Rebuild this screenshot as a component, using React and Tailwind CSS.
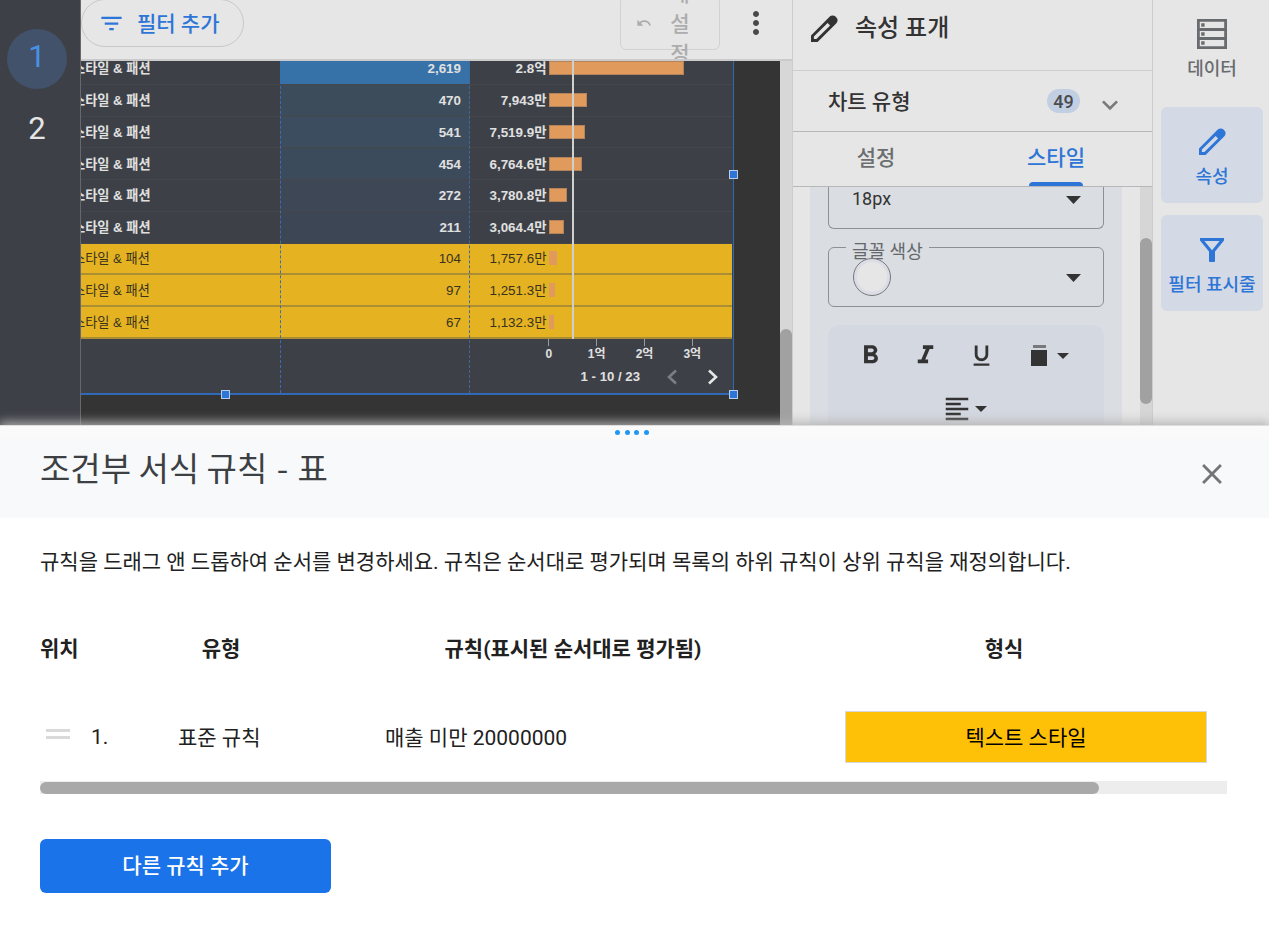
import {
  MdClose,
  MdExpandMore,
  MdFilterList,
  MdFormatAlignLeft,
  MdFormatBold,
  MdFormatItalic,
  MdFormatUnderlined,
  MdMoreVert,
  MdUndo,
} from 'react-icons/md';

const rows = [
  { count: '2,619', sales: '2.8억', bar: 135, heat: 'bg-[#3671a7]' },
  { count: '470', sales: '7,943만', bar: 38, heat: 'bg-[#3c4c5b]' },
  { count: '541', sales: '7,519.9만', bar: 36, heat: 'bg-[#3b4d5e]' },
  { count: '454', sales: '6,764.6만', bar: 33, heat: 'bg-[#3c4b5b]' },
  { count: '272', sales: '3,780.8만', bar: 18, heat: 'bg-[#3d4756]' },
  { count: '211', sales: '3,064.4만', bar: 15, heat: 'bg-[#3d4655]' },
  { count: '104', sales: '1,757.6만', bar: 8, matched: true },
  { count: '97', sales: '1,251.3만', bar: 6, matched: true },
  { count: '67', sales: '1,132.3만', bar: 5, matched: true },
];

function Pencil({ className }) {
  return (
    <svg viewBox="0 0 27 27" fill="currentColor" fillRule="evenodd" className={className}>
      <path d="M0 27v-6.6L18.8 1.6a4 4 0 0 1 5.7 0l.9.9a4 4 0 0 1 0 5.7L6.6 27zM2.9 24.1v-2.5L16.6 7.9l2.5 2.5L5.4 24.1z" />
    </svg>
  );
}

function DataIcon() {
  return (
    <svg viewBox="0 0 30 30" className="size-[30px]" fill="none" stroke="currentColor" strokeWidth="2.8">
      <path d="M1.4 1.4h27.2v27.2H1.4zM1.4 10.5h27.2M1.4 19.5h27.2" />
      <path d="M4.2 6h3.4M4.2 15h3.4M4.2 24h3.4" strokeWidth="3.4" />
    </svg>
  );
}

function Funnel() {
  return (
    <svg viewBox="0 0 24 24" className="size-6" fill="currentColor" fillRule="evenodd">
      <path d="M0 0h24v2.4L15 13.6V23a1 1 0 0 1-1 1h-4a1 1 0 0 1-1-1v-9.4L0 2.4zM4.4 3 12 12.2 19.6 3z" />
    </svg>
  );
}

function Caret({ className = 'h-2 w-[15px]' }) {
  return (
    <svg viewBox="0 0 15 8" preserveAspectRatio="none" className={className} fill="#333">
      <path d="M0 0h15L7.5 8z" />
    </svg>
  );
}

function PageRail() {
  return (
    <nav className="flex w-[81px] shrink-0 flex-col border-r border-[#66686d] bg-[#3e4047] pt-[29px] pl-[7px] font-['Roboto',sans-serif] text-[31px]">
      <span className="flex size-[60px] items-center justify-center rounded-full bg-[#42526a] pb-1 text-[#4a90e2]">1</span>
      <span className="mt-[10px] flex size-[60px] items-center justify-center text-[#e6e6e6]">2</span>
    </nav>
  );
}

function Toolbar() {
  return (
    <div className="flex h-[61px] shrink-0 overflow-hidden border-b-2 border-[#cbcbcb] bg-[#e6e6e6]">
      <button className="-mt-px flex h-12 w-[163px] items-center rounded-full border border-[#c8c8c8] pl-4 text-[21px] font-medium text-[#2d75d6]">
        <MdFilterList className="mr-[12px] size-[27px]" />
        <span className="pt-[3px] whitespace-nowrap">필터 추가</span>
      </button>
      <button className="-mt-1 ml-auto flex h-[54px] w-[100px] items-center rounded-md border border-[#d2d2d2] pl-[15px] text-[#adadad]">
        <MdUndo className="size-4" />
        <span className="ml-[18px] w-5 pt-[2px] text-[21px] leading-[30px] font-medium break-all">재설정</span>
      </button>
      <MdMoreVert className="mt-[5px] mr-[18px] ml-[18px] size-9 text-[#47494b]" />
    </div>
  );
}

function Handle({ className }) {
  return <i className={`absolute size-[9px] border border-[#b9cdea] bg-[#2d75d6] ${className}`} />;
}

function TableChart() {
  return (
    <div className="relative h-[334px] w-[653px] border-r border-b-2 border-[#2f69b8] bg-[#3e4047] font-['Liberation_Sans','Noto_Sans_CJK_KR',sans-serif] text-[#e0e0e0]">
      <div className="h-[278px] overflow-hidden pr-px">
        <div className="-mt-[8px]">
          {rows.map((row) => (
            <div
              key={row.count}
              className={
                row.matched
                  ? 'grid h-[31.75px] grid-cols-[199px_190px_1fr] border-b-2 border-[#ab8e33] bg-[#e5b322] text-[13.2px] text-[#38321f]'
                  : 'grid h-[31.75px] grid-cols-[199px_190px_1fr] border-b border-[#45474a] text-[13.2px] font-bold'
              }
            >
              <div className="flex items-center overflow-hidden pt-[2px]">
                <span className="-ml-2 whitespace-nowrap">스타일 &amp; 패션</span>
              </div>
              <div className={`flex items-center justify-end pt-[2px] pr-[9px] text-[13.4px] ${row.heat ?? ''}`}>{row.count}</div>
              <div className="flex items-center">
                <span className="w-[76.5px] pt-[2px] text-right text-[13.4px] whitespace-nowrap">{row.sales}</span>
                <span
                  className={row.matched ? 'ml-[2px] h-[14px] bg-[#df9a5c]' : 'ml-[2px] h-[14px] border border-[#b5835a] bg-[#df9a5c]'}
                  style={{ width: row.bar }}
                />
              </div>
            </div>
          ))}
        </div>
      </div>

      <div className="ml-[444px] grid grid-cols-[repeat(4,47.8px)] text-center text-[12px] leading-4 font-bold">
        {['0', '1억', '2억', '3억'].map((tick) => (
          <span key={tick} className="flex flex-col items-center">
            <i className="h-[7px] w-px bg-[#9a9b9e]" />
            {tick}
          </span>
        ))}
      </div>
      <div className="flex items-center justify-end pt-[5px] pr-[15px] text-[13.2px] leading-5 font-bold">
        <span className="mr-[27px]">1 - 10 / 23</span>
        <svg viewBox="0 0 10 16" className="mr-[31px] h-4 w-[10px]" fill="none" stroke="#7d7e82" strokeWidth="2.6">
          <path d="M9 1.5 2 8l7 6.5" />
        </svg>
        <svg viewBox="0 0 10 16" className="h-4 w-[10px]" fill="none" stroke="#e6e6e6" strokeWidth="2.6">
          <path d="m1 1.5 7 6.5-7 6.5" />
        </svg>
      </div>

      {/* column guides, reference line and resize handles sit over the chart */}
      <i className="absolute top-0 bottom-0 left-[199px] border-l border-dashed border-[#3a6db3]" />
      <i className="absolute top-0 bottom-0 left-[388px] border-l border-dashed border-[#44679b]" />
      <i className="absolute top-0 left-[491px] h-[278px] w-[1.5px] bg-[#cfcfcf]" />
      <Handle className="top-[109px] -right-[5px]" />
      <Handle className="-right-[5px] -bottom-[6px]" />
      <Handle className="-bottom-[6px] left-[140px]" />
    </div>
  );
}

function Canvas() {
  return (
    <div className="flex min-h-0 flex-1 bg-[#343434]">
      <TableChart />
      <div className="ml-auto w-3 bg-[#d7d7d7] pt-[268px]">
        <div className="h-full rounded-t-full bg-[#a1a1a1]" />
      </div>
    </div>
  );
}

function PropertiesPanel() {
  return (
    <aside className="flex w-[361px] shrink-0 flex-col border-x border-[#cdcdcd] bg-[#e6e6e6] text-[#333]">
      <div className="flex h-[71px] items-start border-b border-[#cdcdcd] pt-[15px] pl-[18px]">
        <Pencil className="size-[27px]" />
        <h2 className="mt-px ml-[17px] text-[24px] leading-6 font-medium">속성 표개</h2>
      </div>
      <div className="flex h-[61px] items-center border-b border-[#b5b7b8] pl-[35px] text-[21px] font-medium">
        <span className="pt-[4px]">차트 유형</span>
        <span className="ml-auto flex h-6 w-[33px] items-center justify-center rounded-full bg-[#c2cee2] font-['Roboto'] text-[18px] text-[#4a4c50]">49</span>
        <MdExpandMore className="mt-2 mr-[26px] ml-[14px] size-8 text-[#7a7a7a]" />
      </div>
      <div className="flex h-[55px] border-b border-[#b5b7b8] text-[21px] font-medium">
        <span className="flex w-[166px] items-center justify-center pb-px text-[#6b6e71]">설정</span>
        <span className="ml-[70px] flex w-[54px] flex-col items-center justify-between whitespace-nowrap text-[#2d75d6]">
          <span className="pt-[11px]">스타일</span>
          <i className="h-1 w-full rounded-t bg-[#2d75d6]" />
        </span>
      </div>
      <div className="flex min-h-0 flex-1">
        <div className="ml-[17px] flex w-[312px] flex-col bg-[#dadde2] px-[18px]">
          <div className="flex h-[42px] shrink-0 items-start justify-between rounded-b-md border border-t-0 border-[#8d9194] pr-[22px] pl-[23px]">
            <span className="font-['Roboto'] text-[18px] leading-6">18px</span>
            <Caret className="mt-[9px] h-2 w-[15px]" />
          </div>
          <div className="relative mt-[18px] flex h-[60px] shrink-0 items-center justify-between rounded-md border border-[#8d9194] pr-[22px] pl-[23px]">
            <span className="absolute -top-[8px] left-[17px] bg-[#dadde2] px-[6px] text-[18px] leading-6 text-[#65686b]">글꼴 색상</span>
            <span className="relative ml-px size-[38px] rounded-full border border-[#777] bg-[#e6e6e6] inset-ring-3 inset-ring-[#dadce6]" />
            <Caret className="mt-px h-2 w-[15px]" />
          </div>
          <div className="mt-[18px] flex-1 rounded-t-xl bg-[#d4d8e0]">
            <div className="flex items-center pt-[15px] pl-[27px]">
              <MdFormatBold className="size-[31px]" />
              <MdFormatItalic className="ml-6 size-[31px]" />
              <MdFormatUnderlined className="ml-[27px] size-[27px]" />
              <span className="ml-[36px] flex flex-col items-center">
                <i className="mb-[2px] h-[3px] w-[13px] bg-[#77797d]" />
                <i className="size-4 bg-[#333]" />
              </span>
              <Caret className="ml-[10px] h-[6px] w-3" />
            </div>
            <div className="flex items-center pt-[23px] pl-[114px]">
              <MdFormatAlignLeft className="size-[30px]" />
              <Caret className="ml-[3px] h-[6px] w-3" />
            </div>
          </div>
        </div>
        <div className="ml-auto w-3 bg-[#d6d6d6] pt-[51px]">
          <div className="h-[166px] rounded-full bg-[#a1a1a1]" />
        </div>
      </div>
    </aside>
  );
}

function ToolRail() {
  return (
    <nav className="flex w-[116px] shrink-0 flex-col items-center gap-3 bg-[#e6e6e6] pl-[2px] text-[18px] leading-6 font-medium">
      <div className="flex h-[95px] flex-col items-center pt-[19px] text-[#696c6f]">
        <DataIcon />
        <span className="mt-[8px]">데이터</span>
      </div>
      <div className="flex h-24 w-[102px] flex-col items-center rounded-md bg-[#d3d9e5] pt-[21px] text-[#2d75d6]">
        <Pencil className="size-[27px]" />
        <span className="mt-[10px]">속성</span>
      </div>
      <div className="flex h-24 w-[102px] flex-col items-center rounded-md bg-[#d3d9e5] pt-[23px] text-[#2d75d6]">
        <Funnel />
        <span className="mt-[11px] whitespace-nowrap">필터 표시줄</span>
      </div>
    </nav>
  );
}

function RulesSheet() {
  return (
    <section className="relative flex h-[510px] flex-col border-t border-[#dedede] bg-white text-[21px] text-[#212121] shadow-[0_-2px_10px_1px_rgba(179,179,179,0.95)]">
      <div className="flex h-3 shrink-0 justify-center gap-[4.5px] bg-[#fafafa] pt-1 pr-[5px]">
        <i className="size-[5px] rounded-full bg-[#2196f3]" />
        <i className="size-[5px] rounded-full bg-[#2196f3]" />
        <i className="size-[5px] rounded-full bg-[#2196f3]" />
        <i className="size-[5px] rounded-full bg-[#2196f3]" />
      </div>
      <header className="flex h-20 shrink-0 items-center justify-between bg-[#f8f9fb] pr-10 pl-10">
        <h1 className="pb-[22px] font-['Noto_Sans_CJK_KR',sans-serif] text-[33px] leading-[48px] text-[#3c4043]">
          조건부 서식 규칙 <span className="px-[2px]">-</span> 표
        </h1>
        <MdClose className="mb-2 size-[34px] text-[#757575]" />
      </header>

      <div className="px-10">
        <p className="mt-[29px] leading-[30px]">
          규칙을 드래그 앤 드롭하여 순서를 변경하세요. 규칙은 순서대로 평가되며 목록의 하위 규칙이 상위 규칙을 재정의합니다.
        </p>
        <div className="mt-[57px] grid grid-cols-[97px_168px_536px_326px] text-center leading-[30px] font-bold">
          <span className="text-left">위치</span>
          <span>유형</span>
          <span>규칙(표시된 순서대로 평가됨)</span>
          <span>형식</span>
        </div>
        <div className="mt-[47px] grid h-[52px] grid-cols-[51px_87px_207px_460px_362px] items-center">
          <span className="mb-[7px] ml-[6px] flex w-6 flex-col gap-1">
            <i className="h-[3px] bg-[#d9d9d9]" />
            <i className="h-[3px] bg-[#d9d9d9]" />
          </span>
          <span className="pt-[2px] font-['Roboto']">1.</span>
          <span className="pt-[3px]">표준 규칙</span>
          <span className="pt-[3px]">매출 미만 20000000</span>
          <button className="h-full border border-[#d5d8dd] bg-[#ffc107] pt-[3px] text-black">텍스트 스타일</button>
        </div>
        <div className="mt-[18px] h-[13px] w-[1187px] bg-[#ededed] pt-px">
          <div className="h-3 w-[1059px] rounded-full bg-[#a9a9a9]" />
        </div>
        <button className="mt-[45px] h-[54px] w-[291px] rounded-md bg-[#1a73e8] pt-px font-medium text-white">다른 규칙 추가</button>
      </div>
    </section>
  );
}

export default function App() {
  return (
    <div className="h-[935px] w-[1269px] overflow-hidden bg-white font-['Roboto','Noto_Sans_CJK_KR',sans-serif]">
      <div className="flex h-[425px] overflow-hidden">
        <PageRail />
        <main className="flex min-w-0 flex-1 flex-col overflow-hidden">
          <Toolbar />
          <Canvas />
        </main>
        <PropertiesPanel />
        <ToolRail />
      </div>
      <RulesSheet />
    </div>
  );
}
